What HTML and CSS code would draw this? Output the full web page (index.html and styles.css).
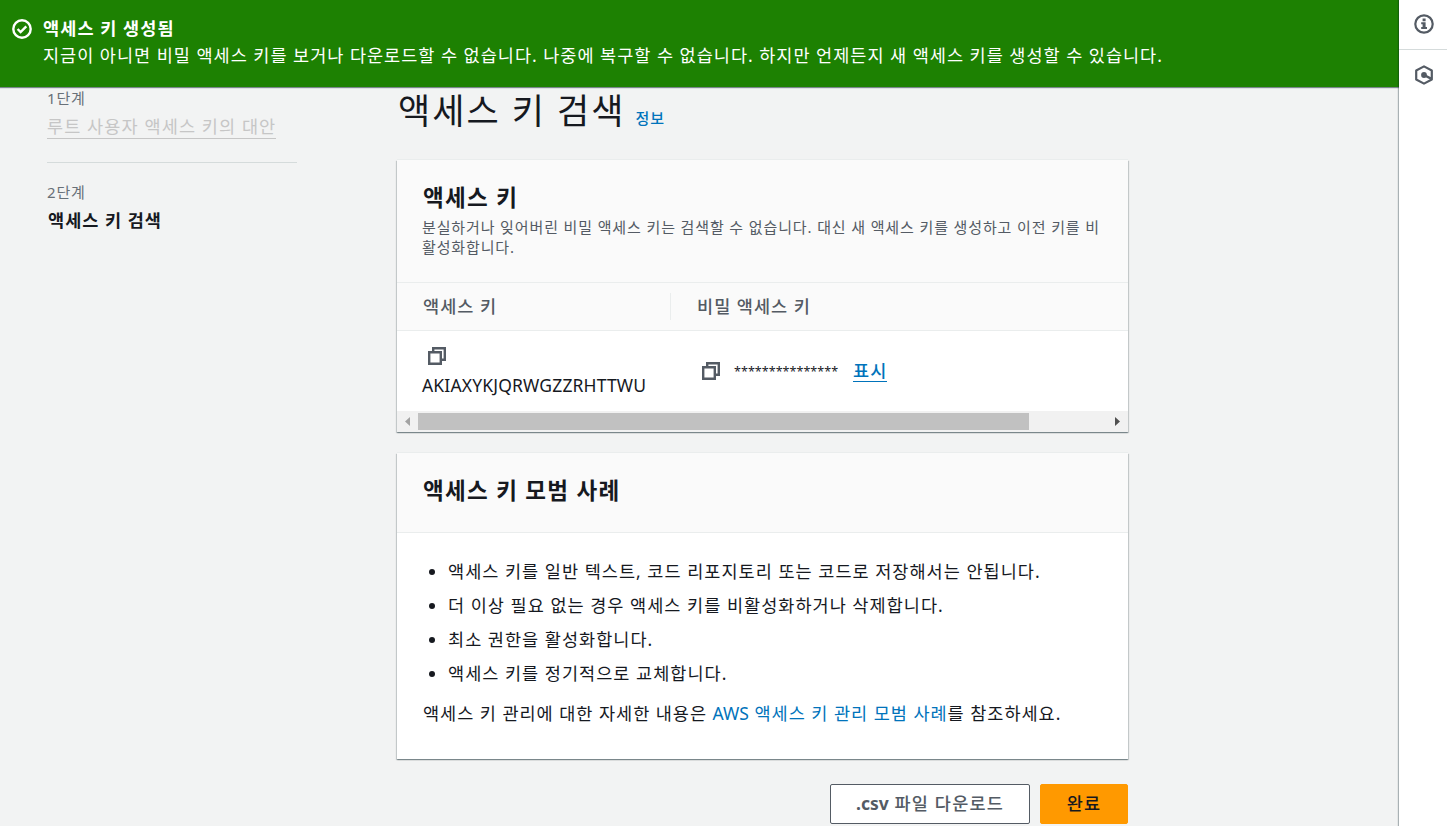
FILE: index.html
```
<!DOCTYPE html>
<html lang="ko">
<head>
    <meta charset="UTF-8">
    <meta name="viewport" content="width=device-width, initial-scale=1.0">
    <title>액세스 키 검색</title>
    <link rel="stylesheet" href="styles.css">
</head>
<body>
    <div class="app">
        <div class="main">
            <div class="flashbar">
                <svg class="flash-icon" viewBox="0 0 20 20" width="20" height="20" fill="none" stroke="#fff" stroke-width="2.4">
                    <circle cx="10" cy="10" r="8.7"/>
                    <path d="M5.6 10l3 3L14.3 7.3"/>
                </svg>
                <div class="flash-text">
                    <div class="flash-title">액세스 키 생성됨</div>
                    <div class="flash-message">지금이 아니면 비밀 액세스 키를 보거나 다운로드할 수 없습니다. 나중에 복구할 수 없습니다. 하지만 언제든지 새 액세스 키를 생성할 수 있습니다.</div>
                </div>
            </div>

            <div class="wizard">
                <nav class="steps">
                    <div class="step">
                        <div class="step-label">1단계</div>
                        <a class="step-link">루트 사용자 액세스 키의 대안</a>
                    </div>
                    <div class="step">
                        <div class="step-label">2단계</div>
                        <div class="step-current">액세스 키 검색</div>
                    </div>
                </nav>

                <div class="content">
                    <div class="page-header">
                        <h1>액세스 키 검색</h1>
                        <a class="info-link">정보</a>
                    </div>

                    <section class="card">
                        <div class="card-header">
                            <h2>액세스 키</h2>
                            <p class="description">분실하거나 잊어버린 비밀 액세스 키는 검색할 수 없습니다. 대신 새 액세스 키를 생성하고 이전 키를 비<br>활성화합니다.</p>
                        </div>
                        <div class="table-row table-head">
                            <div class="cell cell-key">액세스 키</div>
                            <div class="cell cell-secret">비밀 액세스 키</div>
                        </div>
                        <div class="table-row table-body">
                            <div class="cell cell-key">
                                <svg class="copy-icon" viewBox="0 0 20 20" width="20" height="20" fill="none" stroke="#545b64" stroke-width="2.4">
                                    <path d="M2.2 6.2h11.6v11.6H2.2z"/>
                                    <path d="M6.2 6V2.2h11.6v11.6H14"/>
                                </svg>
                                <div class="key-value">AKIAXYKJQRWGZZRHTTWU</div>
                            </div>
                            <div class="cell cell-secret">
                                <svg class="copy-icon" viewBox="0 0 20 20" width="20" height="20" fill="none" stroke="#545b64" stroke-width="2.4">
                                    <path d="M2.2 6.2h11.6v11.6H2.2z"/>
                                    <path d="M6.2 6V2.2h11.6v11.6H14"/>
                                </svg>
                                <span class="secret-value">***************</span>
                                <a class="show-link">표시</a>
                            </div>
                        </div>
                        <div class="scrollbar">
                            <svg class="arrow" viewBox="0 0 21 21" width="21" height="21"><path d="M13 6v9l-5-4.5z" fill="#a3a3a3"/></svg>
                            <div class="scroll-track"><div class="scroll-thumb"></div></div>
                            <svg class="arrow" viewBox="0 0 21 21" width="21" height="21"><path d="M8 6v9l5-4.5z" fill="#505050"/></svg>
                        </div>
                    </section>

                    <section class="card">
                        <div class="card-header practices-header">
                            <h2>액세스 키 모범 사례</h2>
                        </div>
                        <div class="card-body">
                            <ul>
                                <li>액세스 키를 일반 텍스트, 코드 리포지토리 또는 코드로 저장해서는 안됩니다.</li>
                                <li>더 이상 필요 없는 경우 액세스 키를 비활성화하거나 삭제합니다.</li>
                                <li>최소 권한을 활성화합니다.</li>
                                <li>액세스 키를 정기적으로 교체합니다.</li>
                            </ul>
                            <p class="more">액세스 키 관리에 대한 자세한 내용은 <a><span class="latin">AWS</span> 액세스 키 관리 모범 사례</a>를 참조하세요.</p>
                        </div>
                    </section>

                    <div class="actions">
                        <button class="btn btn-normal"><span class="latin">.csv</span> 파일 다운로드</button>
                        <button class="btn btn-primary">완료</button>
                    </div>
                </div>
            </div>
        </div>

        <aside class="tools">
            <div class="tool">
                <svg viewBox="0 0 20 20" width="20" height="20">
                    <circle cx="10" cy="10" r="8.7" fill="none" stroke="#545b64" stroke-width="2.2"/>
                    <path d="M8.6 4.6h3v2.6h-3zM7.2 8.3h4.4v4.8h1.4v2H7.2v-2h1.4v-2.8H7.2z" fill="#545b64"/>
                </svg>
            </div>
            <div class="tool">
                <svg viewBox="0 0 20 20" width="20" height="20" fill="none" stroke="#545b64">
                    <path d="M10 1.4l7.8 4.1v9L10 18.6l-7.8-4.1v-9z" stroke-width="2.2" stroke-linejoin="round"/>
                    <circle cx="10" cy="10" r="2.9" fill="#545b64" stroke="none"/>
                    <path d="M10 10l7 3.6" stroke-width="2.4"/>
                </svg>
            </div>
        </aside>
    </div>
</body>
</html>
```
FILE: styles.css
```
* {
    box-sizing: border-box;
}

body {
    margin: 0;
    font-family: "Noto Sans", "Noto Sans CJK KR", sans-serif;
    font-size: 17.5px;
    line-height: 27px;
    letter-spacing: 1.03px;
    color: #16191f;
    background: #f2f3f3;
}

h1, h2, p, ul {
    margin: 0;
    padding: 0;
}

a {
    color: #0073bb;
}

.app {
    display: flex;
    height: 826px;
    overflow: hidden;
}

.main {
    flex: 1;
    min-width: 0;
}

.flashbar {
    display: flex;
    gap: 11px;
    height: 87px;
    padding: 15px 12px;
    color: #fff;
    background: #1d8102;
    box-shadow: 0 1px 1px rgba(0, 28, 36, 0.5);
}

.flash-icon {
    margin-top: 4px;
}

.flash-title {
    font-weight: 700;
    letter-spacing: 1.1px;
}

.flash-message {
    letter-spacing: 1px;
    white-space: nowrap;
}

.wizard {
    display: flex;
    padding-left: 47px;
}

.steps {
    width: 250px;
    margin-right: 100px;
    padding-top: 1px;
}

.step {
    height: 75px;
    margin-bottom: 19px;
}

.step:first-child {
    border-bottom: 1px solid #d5dbdb;
}

.step-label {
    font-size: 15px;
    line-height: 20px;
    letter-spacing: 0.8px;
    margin-bottom: 5px;
    color: #687078;
}

.step-link {
    display: inline-block;
    line-height: 23px;
    letter-spacing: 1.12px;
    border-bottom: 1px solid #c6c6c6;
    color: #c6c6c6;
    white-space: nowrap;
    margin-top: -1px;
}

.step-current {
    padding-left: 1px;
    font-weight: 700;
}

.content {
    width: 731px;
}

.page-header {
    display: flex;
    align-items: baseline;
    gap: 10px;
    height: 73px;
    padding: 1px 0 0 1px;
}

h1 {
    font-size: 35px;
    font-weight: 400;
    line-height: 46px;
    letter-spacing: 2px;
}

.info-link {
    font-size: 15px;
    font-weight: 500;
}

.card {
    margin-bottom: 21px;
    background: #fff;
    box-shadow: 0 1px 1px 0 rgba(0, 28, 36, 0.3), 1px 1px 1px 0 rgba(0, 28, 36, 0.15), -1px 1px 1px 0 rgba(0, 28, 36, 0.15), 0 -1px 0 0 #eaeded;
}

.card-header {
    height: 123px;
    padding: 22px 25px 0;
    background: #fafafa;
    border-bottom: 1px solid #eaeded;
}

h2 {
    padding: 1px 0 0 1px;
    font-size: 22.5px;
    font-weight: 700;
    line-height: 30px;
    letter-spacing: 1.3px;
}

.description {
    margin-top: 4px;
    font-size: 15px;
    line-height: 20px;
    letter-spacing: 0.87px;
    color: #545b64;
    white-space: nowrap;
}

.table-row {
    display: flex;
    align-items: center;
}

.table-head {
    height: 48px;
    padding-bottom: 1px;
    font-weight: 500;
    color: #545b64;
    background: #fafafa;
    border-bottom: 1px solid #eaeded;
}

.cell-key {
    width: 274px;
    padding-left: 25px;
}

.table-head .cell-key {
    padding-left: 26px;
    border-right: 1px solid #eaeded;
}

.cell-secret {
    padding-left: 25px;
}

.table-head .cell-secret {
    padding-left: 26px;
}

.table-body {
    height: 80px;
}

.table-body .cell-secret {
    display: flex;
    align-items: center;
}

.copy-icon {
    display: block;
    margin-left: 5px;
}

.key-value {
    margin-top: 6px;
    margin-bottom: -3px;
    letter-spacing: 0.16px;
}

.secret-value {
    margin: 0 15px 0 13px;
    font-size: 12.6px;
    letter-spacing: 0;
}

.show-link {
    font-weight: 500;
    line-height: 22px;
    margin-bottom: 2px;
    border-bottom: 1px solid #0073bb;
}

.scrollbar {
    display: flex;
    height: 21px;
    background: #f1f1f1;
}

.scroll-track {
    flex: 1;
    padding: 2px 0;
}

.scroll-thumb {
    width: 611px;
    height: 17px;
    background: #c1c1c1;
}

.practices-header {
    height: 80px;
}

.card-body {
    height: 226px;
    padding: 25px 25px 0;
}

li {
    margin: 0 0 7px 26px;
}

.more {
    margin-top: 13px;
    padding-left: 1px;
    letter-spacing: 0.99px;
}

.latin {
    letter-spacing: 0;
}

.actions {
    display: flex;
    justify-content: flex-end;
    gap: 10px;
    padding-top: 4px;
}

.btn {
    height: 40px;
    padding: 0 25px 2px;
    font: inherit;
    font-weight: 500;
    letter-spacing: 1.2px;
    border: 1px solid #545b64;
    border-radius: 2px;
    white-space: nowrap;
}

.btn .latin {
    font-weight: 700;
}

.btn-normal {
    width: 200px;
    color: #545b64;
    background: #fff;
}

.btn-primary {
    width: 88px;
    color: #16191f;
    background: #ff9900;
    border-color: #ff9900;
}

.tools {
    width: 48px;
    background: #fff;
    box-shadow: -1px 0 1px rgba(0, 28, 36, 0.3);
}

.tool {
    display: flex;
    align-items: center;
    justify-content: center;
    height: 50px;
    padding-left: 2px;
}

.tool:first-child {
    padding-bottom: 1px;
    border-bottom: 1px solid #d5dbdb;
}
```
